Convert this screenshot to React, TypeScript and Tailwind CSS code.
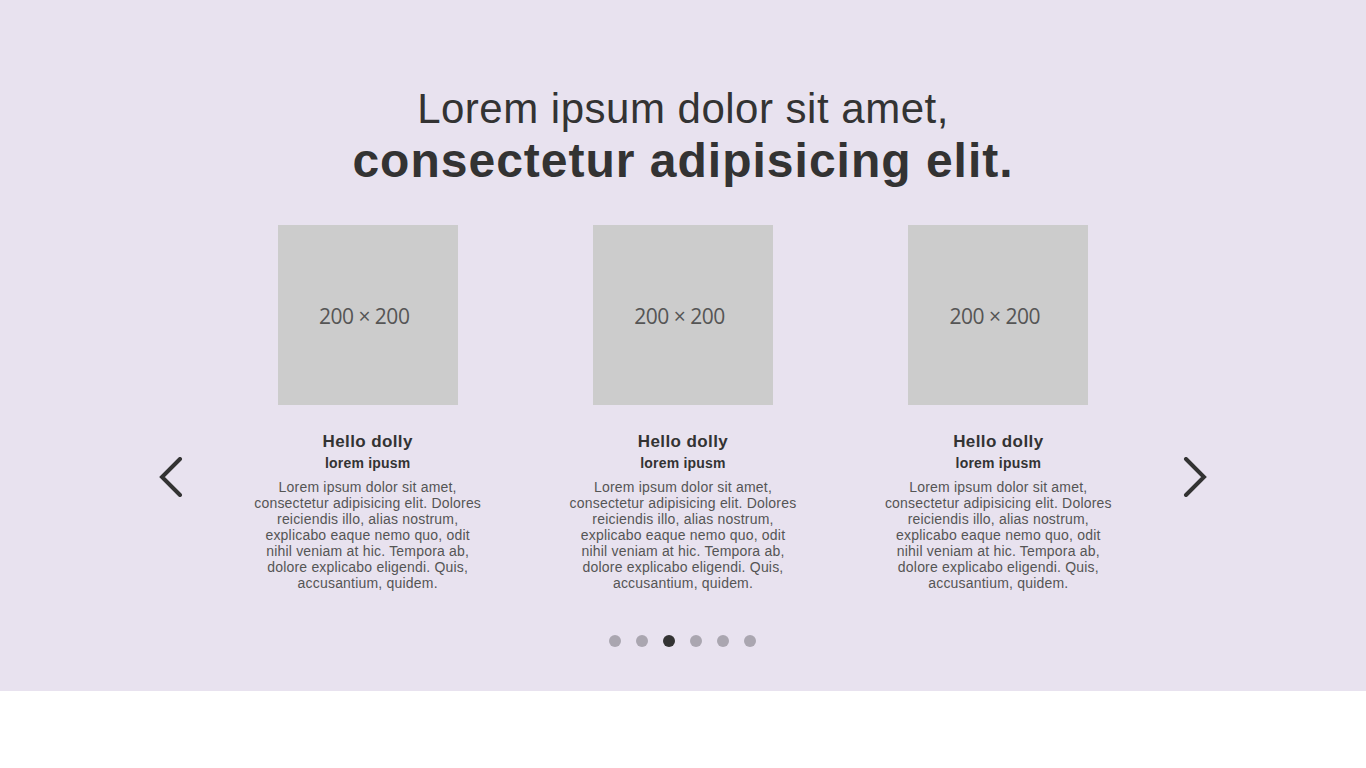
const cards = [1, 2, 3];
const dots = [0, 1, 2, 3, 4, 5];

function Chevron({ dir }: { dir: "left" | "right" }) {
  return (
    <svg width="26" height="40" viewBox="0 0 26 40" fill="none">
      <path
        d={dir === "left" ? "M22 2 L4 20 L22 38" : "M4 2 L22 20 L4 38"}
        stroke="#333333"
        strokeWidth="4"
        strokeLinecap="round"
        strokeLinejoin="miter"
      />
    </svg>
  );
}

function Card() {
  return (
    <div className="flex flex-col items-center">
      <div className="flex h-[180px] w-[180px] items-center justify-center bg-[#cccccc]">
        <span className="mt-[3px] mr-[7px] font-['Open_Sans',sans-serif] text-[21px] tracking-[-0.5px] text-[#555555]">
          200 × 200
        </span>
      </div>
      <h3 className="mt-[27px] text-[17px] leading-[20px] font-bold tracking-[0.4px] text-[#333333]">
        Hello dolly
      </h3>
      <h4 className="mt-[3px] text-[14px] leading-[17px] font-bold tracking-[0.2px] text-[#333333]">
        lorem ipusm
      </h4>
      <p className="mt-[7px] w-[230px] text-center text-[14px] leading-[16px] tracking-[0.2px] text-[#555555]">
        Lorem ipsum dolor sit amet, consectetur adipisicing elit. Dolores reiciendis illo, alias nostrum,
        explicabo eaque nemo quo, odit nihil veniam at hic. Tempora ab, dolore explicabo eligendi. Quis,
        accusantium, quidem.
      </p>
    </div>
  );
}

export default function App() {
  return (
    <div className="min-h-[768px] bg-white font-['Liberation_Sans',Arial,sans-serif]">
      <section className="flex h-[691px] flex-col items-center bg-[#e8e2ef] pt-[84px]">
        <h1 className="text-center text-[42px] leading-[50px] tracking-[0.5px] text-[#333333]">
          Lorem ipsum dolor sit amet,
          <br />
          <span className="text-[48px] font-black leading-[54px] tracking-[1px]">
            consectetur adipisicing elit.
          </span>
        </h1>

        <div className="mt-[37px] flex items-start">
          <button className="mt-[232px] mr-[26px] flex h-[40px] w-[26px] items-center justify-center">
            <Chevron dir="left" />
          </button>
          <div className="grid w-[946px] grid-cols-3">
            {cards.map((c) => (
              <Card key={c} />
            ))}
          </div>
          <button className="mt-[232px] ml-[26px] flex h-[40px] w-[26px] items-center justify-center">
            <Chevron dir="right" />
          </button>
        </div>

        <div className="mt-[44px] mr-[2px] flex gap-[15px]">
          {dots.map((d) => (
            <span
              key={d}
              className={d === 2 ? "h-3 w-3 rounded-full bg-[#333333]" : "h-3 w-3 rounded-full bg-[#aaa6b0]"}
            />
          ))}
        </div>
      </section>
    </div>
  );
}
